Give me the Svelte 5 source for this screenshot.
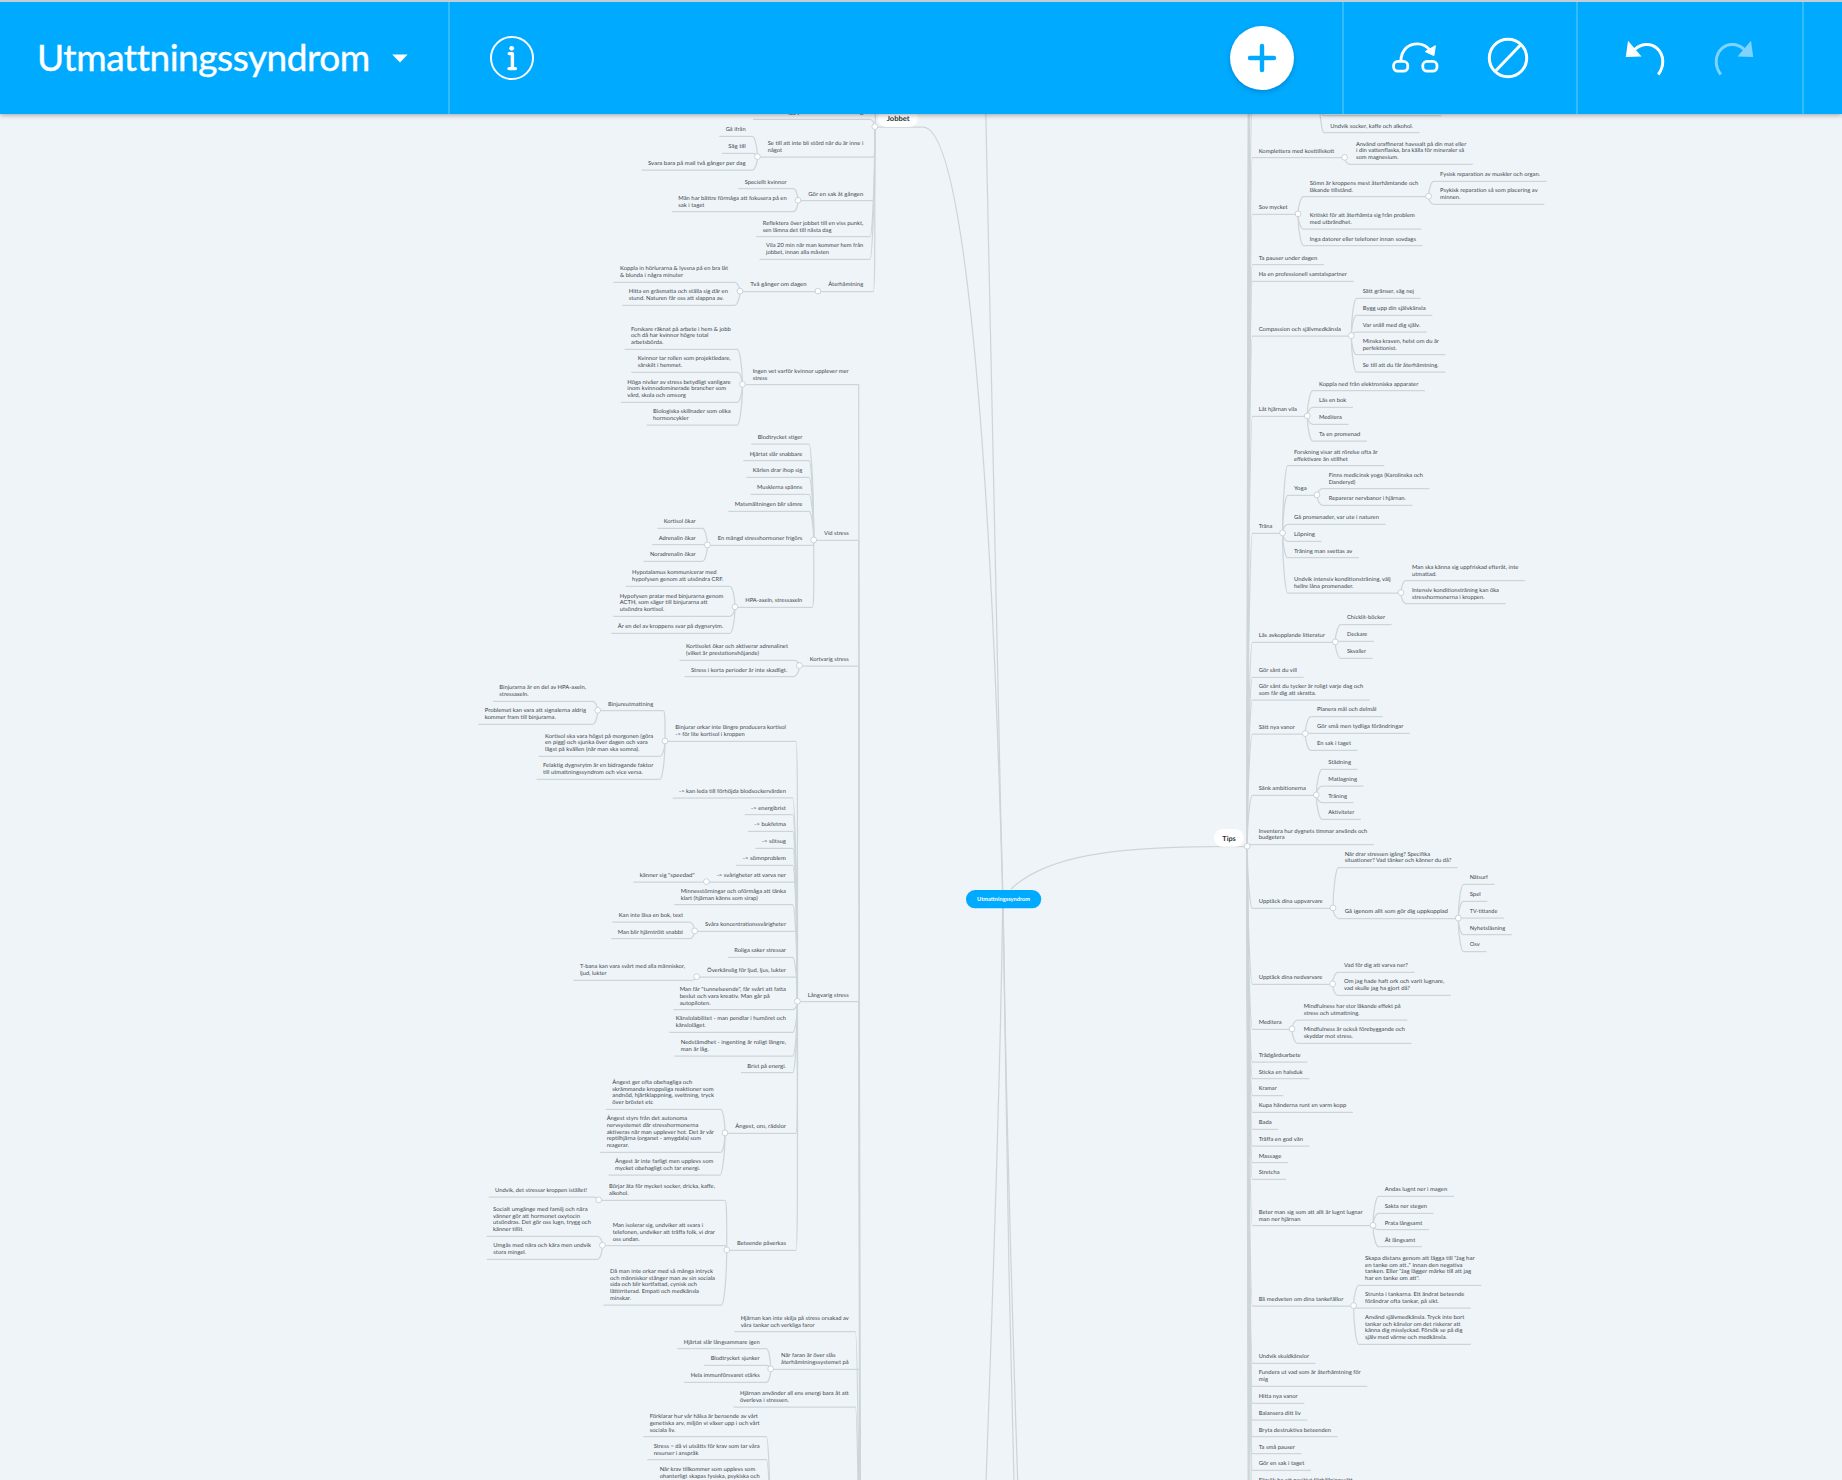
<script>
  // Each node: [text left, text right, underline y, text lines split by |, children]
  const n = (x0, x1, y, text, kids = []) => ({ x0, x1, y, lines: text ? text.split('|') : [], kids });

  const jobbet = [
    n(759.5, 863.3, 119.3, 'Planera lägg paus för återhämtning'),
    n(767.7, 863.3, 157, 'Se till att inte bli störd när du är inne i|något', [
      n(725.7, 745.7, 136.3, 'Gå ifrån'),
      n(728.3, 745.7, 153.3, 'Säg till'),
      n(648, 745.7, 170, 'Svara bara på mail två gånger per dag')
    ]),
    n(808.3, 863.3, 200.7, 'Gör en sak åt gången', [
      n(744.7, 786.7, 188.7, 'Speciellt kvinnor'),
      n(678.3, 786.7, 211.7, 'Män har bättre förmåga att fokusera på en|sak i taget')
    ]),
    n(762.7, 863.3, 236.7, 'Reflektera över jobbet till en viss punkt,|sen lämna det till nästa dag'),
    n(766, 863.3, 259.3, 'Vila 20 min när man kommer hem från|jobbet, innan alla måsten'),
    n(828.3, 863.3, 291.5, 'Återhämtning', [
      n(750.3, 806.7, 291.5, 'Två gånger om dagen', [
        n(620, 728, 282.3, 'Koppla in hörlurarna & lyssna på en bra låt|& blunda i några minuter'),
        n(628.7, 728, 305.3, 'Hitta en gräsmatta och ställa sig där en|stund. Naturen får oss att slappna av.')
      ])
    ])
  ];

  const stress = [
    n(752.7, 848.7, 384.7, 'Ingen vet varför kvinnor upplever mer|stress', [
      n(631, 730.7, 349.3, 'Forskare räknat på arbete i hem & jobb|och då har kvinnor högre total|arbetsbörda.'),
      n(637.7, 730.7, 372.3, 'Kvinnor tar rollen som projektledare,|särskilt i hemmet.'),
      n(627.3, 730.7, 402.3, 'Höga nivåer av stress betydligt vanligare|inom kvinnodominerade brancher som|vård, skola och omsorg'),
      n(653, 730.7, 425, 'Biologiska skillnader som olika|hormoncykler')
    ]),
    n(824, 848.7, 540.3, 'Vid stress', [
      n(757.7, 802.3, 444, 'Blodtrycket stiger'),
      n(749.7, 802.3, 460.7, 'Hjärtat slår snabbare'),
      n(752.7, 802.3, 477.3, 'Kärlen drar ihop sig'),
      n(757, 802.3, 494.3, 'Musklerna spänns'),
      n(734.7, 802.3, 511.3, 'Matsmältningen blir sämre'),
      n(717.7, 802.3, 545.3, 'En mängd stresshormoner frigörs', [
        n(663.7, 695.7, 528.3, 'Kortisol ökar'),
        n(658.7, 695.7, 544.7, 'Adrenalin ökar'),
        n(650, 695.7, 561.3, 'Noradrenalin ökar')
      ]),
      n(745.3, 802.3, 607.3, 'HPA-axeln, stressaxeln', [
        n(632, 723.3, 586.3, 'Hypotalamus kommunicerar med|hypofysen genom att utsöndra CRF.'),
        n(619.7, 723.3, 616.3, 'Hypofysen pratar med binjurarna genom|ACTH, som säger till binjurarna att|utsöndra kortisol.'),
        n(617.7, 723.3, 633.3, 'Är en del av kroppens svar på dygnsrytm.')
      ])
    ]),
    n(809.7, 848.7, 666, 'Kortvarig stress', [
      n(686, 788, 660.3, 'Kortisolet ökar och aktiverar adrenalinet|(vilket är prestationshöjande)'),
      n(691, 787.3, 676.7, 'Stress i korta perioder är inte skadligt.')
    ]),
    n(807.7, 848.7, 1001.7, 'Långvarig stress', [
      n(675.3, 786, 741.3, 'Binjurar orkar inte längre producera kortisol|-> för lite kortisol i kroppen', [
        n(608, 653.3, 710.7, 'Binjureutmattning', [
          n(499.3, 586, 701.3, 'Binjurarna är en del av HPA-axeln,|stressaxeln.'),
          n(484.7, 586, 724.3, 'Problemet kan vara att signalerna aldrig|kommer fram till binjurarna.')
        ]),
        n(545, 653.3, 756.3, 'Kortisol ska vara högst på morgonen (göra|en pigg) och sjunka över dagen och vara|lägst på kvällen (när man ska somna).'),
        n(543, 653.3, 779.3, 'Felaktig dygnsrytm är en bidragande faktor|till utmattningssyndrom och vice versa.')
      ]),
      n(679, 786, 798, '-> kan leda till förhöjda blodsockervärden'),
      n(751, 786, 814.7, '-> energibrist'),
      n(754.3, 786, 831.3, '-> bukfetma'),
      n(761.7, 786, 848.3, '-> sötsug'),
      n(742.7, 786, 865.3, '-> sömnproblem'),
      n(716.7, 786, 882, '-> svårigheter att varva ner', [
        n(639.7, 694.7, 882, 'känner sig "speedad"')
      ]),
      n(680.7, 786, 904.7, 'Minnesstörningar och oförmåga att tänka|klart (hjärnan känns som sirap)'),
      n(705, 786, 931.3, 'Svåra koncentrationssvårigheter', [
        n(618.7, 683, 922, 'Kan inte läsa en bok, text'),
        n(617.7, 683, 938.7, 'Man blir hjärntrött snabbt')
      ]),
      n(734.3, 786, 957.4, 'Roliga saker stressar'),
      n(707, 786, 977, 'Överkänslig för ljud, ljus, lukter', [
        n(580, 685, 980.3, 'T-bana kan vara svårt med alla människor,|ljud, lukter')
      ]),
      n(679.7, 786, 1009.7, 'Man får "tunnelseende", får svårt att fatta|beslut och vara kreativ. Man går på|autopiloten.'),
      n(675.7, 786, 1032.3, 'Känslolabilitet - man pendlar i humöret och|känsloläget.'),
      n(680.7, 786, 1056, 'Nedstämdhet - ingenting är roligt längre,|man är låg.'),
      n(747.3, 786, 1072.7, 'Brist på energi.'),
      n(735.3, 786, 1133.3, 'Ångest, oro, rädslor', [
        n(612.3, 714, 1109.3, 'Ångest ger ofta obehagliga och|skrämmande kroppsliga reaktioner som|andnöd, hjärtklappning, svettning, tryck|över bröstet etc'),
        n(606.7, 714, 1152.3, 'Ångest styrs från det autonoma|nervsystemet där stresshormonerna|aktiveras när man upplever hot. Det är vår|reptilhjärna (organet - amygdala) som|reagerar.'),
        n(615, 713.3, 1175, 'Ångest är inte farligt men upplevs som|mycket obehagligt och tar energi.')
      ]),
      n(737, 786, 1250.3, 'Beteende påverkas', [
        n(609, 715, 1200.3, 'Börjar äta för mycket socker, dricka, kaffe,|alkohol.', [
          n(495, 587, 1197, 'Undvik, det stressar kroppen istället!')
        ]),
        n(612.7, 715, 1245.7, 'Man isolerar sig, undviker att svara i|telefonen, undviker att träffa folk, vi drar|oss undan.', [
          n(493, 591, 1236.3, 'Socialt umgänge med familj och nära|vänner gör att hormonet oxytocin|utsöndras. Det gör oss lugn, trygg och|känner tillit.'),
          n(493.3, 591, 1259.3, 'Umgås med nära och kära men undvik|stora mingel.')
        ]),
        n(610, 715, 1305, 'Då man inte orkar med så många intryck|och människor stänger man av sin sociala|sida och blir kortfattad, cynisk och|lättirriterad. Empati och medkänsla|minskar.')
      ])
    ]),
    n(740.7, 848.7, 1331.7, 'Hjärnan kan inte skilja på stress orsakad av|våra tankar och verkliga faror'),
    n(781, 848.7, 1369.3, 'När faran är över slås|återhämtningssystemet på', [
      n(683.7, 759.7, 1348.7, 'Hjärtat slår långsammare igen'),
      n(710.7, 759.7, 1365.3, 'Blodtrycket sjunker'),
      n(690.7, 759.7, 1382.3, 'Hela immunförsvaret stärks')
    ]),
    n(740, 848.7, 1407, 'Hjärnan använder all ens energi bara åt att|överleva i stressen.'),
    n(781, 848.7, 1560, '', [
      n(649.7, 759.7, 1436.7, 'Förklarar hur vår hälsa är beroende av vårt|genetiska arv, miljön vi växer upp i och vårt|sociala liv.'),
      n(653.7, 759.7, 1459.7, 'Stress = då vi utsätts för krav som tar våra|resurser i anspråk'),
      n(659.7, 759.7, 1490, 'När krav tillkommer som upplevs som|ohanterligt skapas fysiska, psykiska och|sociala reaktioner')
    ])
  ];

  const L = 1258.7;
  const tips = [
    n(L, 1309, 95, '', [
      n(1330.3, 1434.7, 115.7, ''),
      n(1330.3, 1413, 132.7, 'Undvik socker, kaffe och alkohol.')
    ]),
    n(L, 1334.3, 157.7, 'Komplettera med kosttillskott', [
      n(1356, 1466.3, 164.3, 'Använd oraffinerat havssalt på din mat eller|i din vattenflaska, bra källa för mineraler så|som magnesium.')
    ]),
    n(L, 1287.7, 214.3, 'Sov mycket', [
      n(1309.7, 1418.3, 196.7, 'Sömn är kroppens mest återhämtande och|läkande tillstånd.', [
        n(1440, 1540, 181.3, 'Fysisk reparation av muskler och organ.'),
        n(1440, 1537.7, 204.3, 'Psykisk reparation så som placering av|minnen.')
      ]),
      n(1309.7, 1414.7, 229, 'Kritiskt för att återhämta sig från problem|med utbrändhet.'),
      n(1309.7, 1416, 245.7, 'Inga datorer eller telefoner innan sovdags')
    ]),
    n(L, 1317.3, 264.7, 'Ta pauser under dagen'),
    n(L, 1347, 281.3, 'Ha en professionell samtalspartner'),
    n(L, 1341, 336, 'Compassion och självmedkänsla', [
      n(1362.7, 1414, 298.3, 'Sätt gränser, säg nej'),
      n(1362.7, 1425.7, 315.3, 'Bygg upp din självkänsla'),
      n(1362.7, 1420.3, 332, 'Var snäll med dig själv.'),
      n(1362.7, 1439, 354.7, 'Minska kraven, helst om du är|perfektionist.'),
      n(1362.7, 1438.7, 372, 'Se till att du får återhämtning.')
    ]),
    n(L, 1297, 416.3, 'Låt hjärnan vila', [
      n(1319, 1418.3, 390.7, 'Koppla ned från elektroniska apparater'),
      n(1319, 1346.3, 407.3, 'Läs en bok'),
      n(1319, 1342, 424.3, 'Meditera'),
      n(1319, 1360.3, 441, 'Ta en promenad')
    ]),
    n(L, 1272.3, 533.3, 'Träna', [
      n(1294, 1377.7, 465.7, 'Forskning visar att rörelse ofta är|effektivare än stillhet'),
      n(1294, 1306.7, 495.3, 'Yoga', [
        n(1328.7, 1423, 488.7, 'Finns medicinsk yoga (Karolinska och|Danderyd)'),
        n(1328.7, 1406, 505.3, 'Reparerar nervbanor i hjärnan.')
      ]),
      n(1294, 1379, 524.3, 'Gå promenader, var ute i naturen'),
      n(1294, 1315, 541.3, 'Löpning'),
      n(1294, 1352.3, 557.7, 'Träning man svettas av'),
      n(1294, 1390.7, 593, 'Undvik intensiv konditionsträning, välj|hellre låna promenader.', [
        n(1412, 1518.3, 580.7, 'Man ska känna sig uppfriskad efteråt, inte|utmattad.'),
        n(1412, 1499, 603.7, 'Intensiv konditionsträning kan öka|stresshormonerna i kroppen.')
      ])
    ]),
    n(L, 1325, 642.3, 'Läs avkopplande litteratur', [
      n(1347, 1385, 624.5, 'Chicklit-böcker'),
      n(1347, 1367.3, 641.3, 'Deckare'),
      n(1347, 1366, 658.3, 'Skvaller')
    ]),
    n(L, 1297, 677.3, 'Gör sånt du vill'),
    n(L, 1363.3, 700, 'Gör sånt du tycker är roligt varje dag och|som får dig att skratta.'),
    n(L, 1295, 734, 'Sätt nya vanor', [
      n(1317, 1376.3, 716.5, 'Planera mål och delmål'),
      n(1317, 1403.3, 733.3, 'Gör små men tydliga förändringar'),
      n(1317, 1351, 750.3, 'En sak i taget')
    ]),
    n(L, 1306, 795.3, 'Sänk ambitionerna', [
      n(1328.3, 1351, 769.3, 'Städning'),
      n(1328.3, 1357, 786, 'Matlagning'),
      n(1328.3, 1347, 802.7, 'Träning'),
      n(1328.3, 1354.3, 819.3, 'Aktiviteter')
    ]),
    n(L, 1367.3, 844.5, 'Inventera hur dygnets timmar används och|budgetera'),
    n(L, 1322.7, 908.3, 'Upptäck dina uppvarvare', [
      n(1344.7, 1451.3, 867.5, 'När drar stressen igång? Specifika|situationer? Vad tänker och känner du då?'),
      n(1344.7, 1448, 918.5, 'Gå igenom allt som gör dig uppkopplad', [
        n(1469.7, 1488, 884.3, 'Nätsurf'),
        n(1469.7, 1480.7, 901.3, 'Spel'),
        n(1469.7, 1497.3, 918, 'TV-tittande'),
        n(1469.7, 1505.3, 934.7, 'Nyhetsläsning'),
        n(1469.7, 1479.7, 951.5, 'Osv')
      ])
    ]),
    n(L, 1322.3, 984.3, 'Upptäck dina nedvarvare', [
      n(1344, 1408, 972.3, 'Vad för dig att varva ner?'),
      n(1344, 1444.3, 995.3, 'Om jag hade haft ork och varit lugnare,|vad skulle jag ha gjort då?')
    ]),
    n(L, 1281.7, 1029.3, 'Meditera', [
      n(1303.7, 1400.7, 1020, 'Mindfulness har stor läkande effekt på|stress och utmattning.'),
      n(1303.7, 1405, 1043.3, 'Mindfulness är också förebyggande och|skyddar mot stress.')
    ]),
    n(L, 1300.7, 1062, 'Trädgårdsarbete'),
    n(L, 1302.7, 1078.7, 'Sticka en halsduk'),
    n(L, 1276.7, 1095.5, 'Kramar'),
    n(L, 1346.3, 1112.3, 'Kupa händerna runt en varm kopp'),
    n(L, 1271.7, 1129.3, 'Bada'),
    n(L, 1303, 1146, 'Träffa en god vän'),
    n(L, 1281.3, 1162.7, 'Massage'),
    n(L, 1279.7, 1179.3, 'Stretcha'),
    n(L, 1362.7, 1225.7, 'Beter man sig som att allt är lugnt lugnar|man ner hjärnan', [
      n(1384.7, 1447.3, 1196.3, 'Andas lugnt ner i magen'),
      n(1384.7, 1427, 1213.3, 'Sakta ner stegen'),
      n(1384.7, 1422.3, 1229.7, 'Prata långsamt'),
      n(1384.7, 1415.3, 1246.7, 'Ät långsamt')
    ]),
    n(L, 1343.3, 1306, 'Bli medveten om dina tankefällor', [
      n(1365, 1474.7, 1285.3, 'Skapa distans genom att lägga till "Jag har|en tanke om att.." innan den negativa|tanken. Eller "Jag lägger märke till att jag|har en tanke om att".'),
      n(1365, 1464.3, 1308, 'Strunta i tankarna. Ett ändrat beteende|förändrar ofta tankar, på sikt.'),
      n(1365, 1464.3, 1344.3, 'Använd självmedkänsla. Tryck inte bort|tankar och känslor om det riskerar att|känna dig misslyckad. Försök se på dig|själv med värme och medkänsla.')
    ]),
    n(L, 1309, 1363.3, 'Undvik skuldkänslor'),
    n(L, 1360.7, 1386.3, 'Fundera ut vad som är återhämtning för|mig'),
    n(L, 1297.7, 1403.3, 'Hitta nya vanor'),
    n(L, 1300.7, 1420, 'Balansera ditt liv'),
    n(L, 1331, 1436.7, 'Bryta destruktiva beteenden'),
    n(L, 1295, 1453.7, 'Ta små pauser'),
    n(L, 1304.3, 1470.3, 'Gör en sak i taget'),
    n(L, 1352.7, 1486.9, 'Försök ha ett positivt förhållningssätt'),
    // branches continuing outside the viewport
    n(L, 1300, -60, ''), n(L, 1300, -300, ''), n(L, 1300, -600, ''),
    n(L, 1300, 1600, ''), n(L, 1300, 1800, ''), n(L, 1300, 2100, '')
  ];

  const pen = document.createElement('canvas').getContext('2d');
  pen.font = '100px Lato';

  const LINE = 6.72;
  const paths = [];
  const texts = [];
  const knobs = [];

  function walk(nodes, cx, cy, dir) {
    for (const d of nodes) {
      const leaf = d.kids.length === 0;
      const near = dir > 0 ? d.x0 - 6.3 : d.x1 + (leaf ? 6.7 : 10);
      const far = dir > 0 ? d.x1 + (leaf ? 6.6 : 10.3) : d.x0 - (leaf ? 6.4 : 10.3);
      const dy = d.y - cy;
      if (Math.abs(dy) < 2.5) {
        paths.push(`M${cx} ${d.y}H${far}`);
      } else {
        paths.push(`M${cx} ${cy}C${cx} ${cy + dy * 0.55} ${near - dir * 2} ${d.y} ${near} ${d.y}H${far}`);
      }
      const widths = d.lines.map((s) => pen.measureText(s).width);
      const ratio = (d.x1 - d.x0) / Math.max(1, ...widths);
      d.lines.forEach((s, i) => {
        texts.push({ s, x: d.x0, y: d.y - 5.2 - (d.lines.length - 1 - i) * LINE, w: widths[i] * ratio });
      });
      if (!leaf) {
        knobs.push([far, d.y - 0.4]);
        walk(d.kids, far, d.y, dir);
      }
    }
  }

  walk(jobbet, 874.8, 127, -1);
  walk(stress, 860.3, 1800, -1);
  walk(tips, 1247.3, 846.5, 1);
  knobs.push([874.8, 126.6], [1247.2, 846.2]);

  const trunks = [
    'M875.3 -200V127H923C963 127 990 430 1002.5 890',
    'M985.5 100C989 300 995 600 1002.7 890',
    'M1011 889C1045 857 1110 846.8 1213 846.6H1247',
    'M1002.6 905C1001 1050 993 1290 986 1482',
    'M1003 905C1004 1050 1009 1290 1014 1482',
    'M1003.2 905C1005 1050 1011.5 1290 1017.7 1482'
  ];
</script>

<div class="app">
  <header>
    <div class="cell title">
      <h1>Utmattningssyndrom</h1>
      <svg width="16" height="9" viewBox="0 0 16 9"><path d="M.2.5h15.4L8 8.4z" fill="#fff" /></svg>
    </div>
    <div class="cell info">
      <svg width="46" height="46" viewBox="0 0 46 46" fill="none">
        <circle cx="23" cy="23" r="21" stroke="#fff" stroke-width="2" />
        <circle cx="22.7" cy="13.3" r="2.4" fill="#fff" />
        <path d="M20.2 18.6h3.2v14.8M20 33.6h6.4" stroke="#fff" stroke-width="3.4" stroke-linecap="round" stroke-linejoin="round" />
      </svg>
    </div>
    <div class="cell add">
      <button aria-label="add">
        <svg width="30" height="30" viewBox="0 0 30 30"><path d="M15 3v24M3 15h24" stroke="#00aaff" stroke-width="4.4" stroke-linecap="round" /></svg>
      </button>
    </div>
    <div class="cell link">
      <svg width="50" height="40" viewBox="1391 38 50 40" fill="none" stroke="#fff" stroke-width="2.8">
        <rect x="1393.6" y="61.4" width="14.2" height="9.8" rx="4.2" />
        <rect x="1422.8" y="61.4" width="14.2" height="9.8" rx="4.2" />
        <path d="M1400.8 61C1401.5 49 1409 43.8 1417.5 43.8C1423 43.8 1427 46.3 1430 50" />
        <path d="M1435.4 45.7L1433.9 55.6L1425.2 51.6z" fill="#fff" stroke-width="1" stroke-linejoin="round" />
      </svg>
      <svg width="42" height="42" viewBox="0 0 42 42" fill="none" stroke="#fff" stroke-width="3">
        <circle cx="21" cy="21" r="18.7" /><path d="M8.3 34.2L33.7 7.8" />
      </svg>
    </div>
    <div class="cell history">
      <svg width="40" height="36" viewBox="1625 40 40 36" fill="none">
        <path d="M1633 51.2C1640 43.6 1650 42.2 1656.8 48.2C1664.5 55 1664.5 66.5 1658.2 74.5" stroke="#fff" stroke-width="3" />
        <path d="M1628 40.7L1625.8 57L1641.5 56.6z" fill="#fff" />
      </svg>
      <svg class="redo" width="40" height="36" viewBox="1625 40 40 36" fill="none">
        <path d="M1633 51.2C1640 43.6 1650 42.2 1656.8 48.2C1664.5 55 1664.5 66.5 1658.2 74.5" stroke="#7fd4ff" stroke-width="3" />
        <path d="M1628 40.7L1625.8 57L1641.5 56.6z" fill="#7fd4ff" />
      </svg>
    </div>
  </header>

  <svg class="map" width="1842" height="1366" viewBox="0 114 1842 1366">
    <g class="lines">
      {#each trunks as d}<path {d} />{/each}
      {#each paths as d}<path {d} />{/each}
    </g>
    {#each knobs as [x, y]}<circle class="knob" cx={x} cy={y} r="2.9" />{/each}
    {#each texts as t}
      <text class="label" x={t.x} y={t.y} textLength={t.w} lengthAdjust="spacingAndGlyphs">{t.s}</text>
    {/each}
    <rect x="878" y="109.3" width="39.7" height="17.6" rx="8.6" fill="#fff" />
    <text class="branch" x="886.7" y="121.1" textLength="23" lengthAdjust="spacingAndGlyphs">Jobbet</text>
    <rect x="1214" y="829" width="29.8" height="17.7" rx="8.6" fill="#fff" />
    <text class="branch" x="1222.3" y="840.9" textLength="13.5" lengthAdjust="spacingAndGlyphs">Tips</text>
    <rect x="966" y="890" width="75.2" height="18.3" rx="9" fill="#00aaff" />
    <text class="root" x="977" y="901.1" textLength="53" lengthAdjust="spacingAndGlyphs">Utmattningssyndrom</text>
  </svg>
</div>

<style>
  :global(body) {
    background: #eff4f8;
    overflow: hidden;
  }
  .app {
    width: 1842px;
    height: 1480px;
    overflow: hidden;
    display: flex;
    flex-direction: column;
    background: #eff4f8;
    font-family: Lato, 'Open Sans', sans-serif;
  }
  header {
    position: relative;
    z-index: 1;
    flex: none;
    box-sizing: border-box;
    height: 114px;
    display: flex;
    background: #00aaff;
    border-top: 2px solid #c3cdd3;
    box-shadow: 0 1px 5px rgba(0, 0, 0, 0.35);
  }
  .cell {
    box-sizing: border-box;
    display: flex;
    align-items: center;
    border-right: 2px solid #33bbff;
  }
  .title {
    width: 450px;
    padding-left: 37px;
    gap: 22px;
  }
  h1 {
    margin: 0;
    width: 333px;
    padding-bottom: 2px;
    color: #fff;
    font-size: 37px;
    font-weight: 400;
    line-height: 48px;
    letter-spacing: -0.45px;
    -webkit-text-stroke: 0.4px #fff;
    white-space: nowrap;
  }
  .info {
    flex: 1;
    padding-left: 39px;
    border: 0;
  }
  .add {
    width: 114px;
  }
  button {
    width: 64px;
    height: 64px;
    padding: 0;
    border: 0;
    border-radius: 50%;
    background: #fff;
    display: grid;
    place-items: center;
    box-shadow: 0 2px 5px rgba(0, 60, 110, 0.3);
  }
  .link {
    width: 234px;
    padding-left: 47px;
    gap: 46px;
  }
  .history {
    width: 226px;
    padding-left: 47px;
    gap: 49px;
    margin-right: 38px;
  }
  .redo {
    transform: scaleX(-1);
  }
  .map {
    display: block;
    flex: none;
  }
  .lines {
    fill: none;
    stroke: #ced5d9;
    stroke-width: 1.25;
  }
  .knob {
    fill: #fff;
    stroke: #c6ced3;
    stroke-width: 0.9;
  }
  text {
    text-rendering: geometricPrecision;
  }
  .label {
    font-size: 5.6px;
    fill: #3c464c;
  }
  .branch {
    font-size: 7px;
    font-weight: 700;
    fill: #2b363c;
  }
  .root {
    font-size: 5.7px;
    font-weight: 700;
    fill: #fff;
  }
</style>
